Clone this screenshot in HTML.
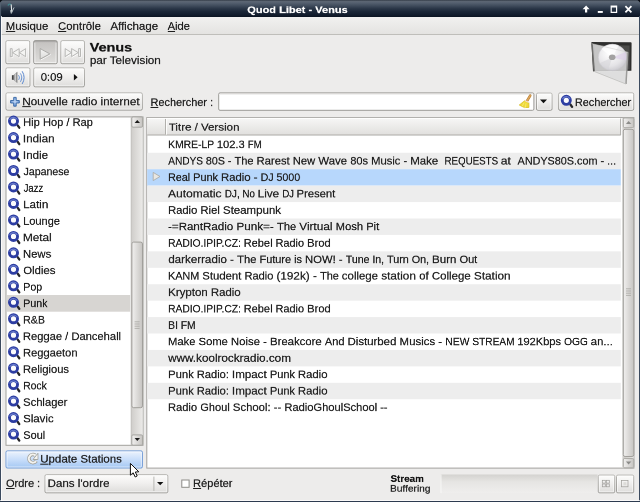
<!DOCTYPE html>
<html>
<head>
<meta charset="utf-8">
<title>Quod Libet - Venus</title>
<style>
html,body{margin:0;padding:0;}
body{width:640px;height:502px;overflow:hidden;background:#edeceb;font-family:"Liberation Sans",sans-serif;font-size:10px;color:#1c1c1c;position:relative;}
.abs{position:absolute;}
.t{position:absolute;white-space:nowrap;transform-origin:0 0;color:#1e1e1e;will-change:transform;-webkit-text-stroke:0.45px currentColor;}
u{text-decoration:underline;text-decoration-thickness:1.8px;text-underline-offset:1.6px;}
#titlebar{left:0;top:0;width:640px;height:16.6px;background:linear-gradient(#2e3742 0%,#5c6673 7%,#566170 16%,#424e5e 32%,#2b3748 50%,#1c2839 66%,#131e2f 85%,#0b1422 100%);}
#menubar{left:1px;top:17px;width:638px;height:17px;background:linear-gradient(#f1f1f0,#e4e3e1);border-bottom:1px solid #bfbeba;}
#lborder{left:0;top:16px;width:1.15px;height:486px;background:#3b4a5e;box-shadow:1px 0 0 rgba(255,255,255,0.75);}
#rborder{left:638.8px;top:16px;width:1.2px;height:486px;background:#3b4a5e;}
#bborder{left:0;top:500.5px;width:640px;height:1.5px;background:#2d3b50;box-shadow:0 -1px 0 rgba(255,255,255,0.7);}
</style>
</head>
<body>
<svg width="0" height="0" style="position:absolute">
<defs>
<g id="mag">
<path d="M10.6 9.9 L12.3 12.3" stroke="#26262a" stroke-width="2.3" stroke-linecap="round"/>
<circle cx="6.5" cy="5.7" r="4.05" fill="#fbfbfd" stroke="#2d3da2" stroke-width="2.9"/>
<path d="M2.6 4.6 A4.2 4.2 0 0 1 10.2 4.2" fill="none" stroke="#7f94dc" stroke-width="1.1" opacity="0.75"/>
</g>
</defs>
</svg>
<div id="titlebar" class="abs"></div>
<div id="menubar" class="abs"></div>

<svg class="abs" style="left:0;top:0" width="640" height="502" viewBox="0 0 640 502">
<defs>
<linearGradient id="gBtn" x1="0" y1="0" x2="0" y2="1"><stop offset="0" stop-color="#fdfdfc"/><stop offset="0.45" stop-color="#f1f0ef"/><stop offset="1" stop-color="#dddcda"/></linearGradient>
<linearGradient id="gBd" x1="0" y1="0" x2="0" y2="1"><stop offset="0" stop-color="#b4b3af"/><stop offset="1" stop-color="#9b9a96"/></linearGradient>
<linearGradient id="gPr" x1="0" y1="0" x2="0" y2="1"><stop offset="0" stop-color="#c3c1bf"/><stop offset="1" stop-color="#dfdedc"/></linearGradient>
<linearGradient id="gHl" x1="0" y1="0" x2="0" y2="1"><stop offset="0" stop-color="#edf4fd"/><stop offset="0.5" stop-color="#c9defa"/><stop offset="1" stop-color="#a3c7f3"/></linearGradient>
<linearGradient id="gHdr" x1="0" y1="0" x2="0" y2="1"><stop offset="0" stop-color="#f7f7f6"/><stop offset="1" stop-color="#e0dfdd"/></linearGradient>
<linearGradient id="gSb" x1="0" y1="0" x2="1" y2="0"><stop offset="0" stop-color="#cfcdca"/><stop offset="1" stop-color="#ebeae8"/></linearGradient>
<linearGradient id="gTh" x1="0" y1="0" x2="1" y2="0"><stop offset="0" stop-color="#f1f0ef"/><stop offset="1" stop-color="#c6c4c1"/></linearGradient>
<linearGradient id="gTr" x1="0" y1="0" x2="0" y2="1"><stop offset="0" stop-color="#d3d2cf"/><stop offset="0.4" stop-color="#e6e5e3"/><stop offset="1" stop-color="#efeeed"/></linearGradient>
</defs>
<rect x="5.90" y="40.70" width="23.80" height="23.00" rx="1.3" fill="url(#gBtn)" stroke="url(#gBd)" stroke-width="1" />
<rect x="6.90" y="41.70" width="21.80" height="21.00" rx="0.8" fill="none" stroke="#ffffff" stroke-width="1" opacity="0.6"/>
<rect x="33.80" y="40.70" width="23.30" height="23.00" rx="1.3" fill="url(#gPr)" stroke="#8f8e8a" stroke-width="1" />
<path d="M34.80 42.70 V62.70 H56.10 V42.70" fill="none" stroke="#fff" stroke-width="0.9" opacity="0.75"/>
<path d="M34.80 41.70 H56.10" stroke="#000" stroke-width="1" opacity="0.10"/>
<rect x="60.90" y="40.70" width="23.50" height="23.00" rx="1.3" fill="url(#gBtn)" stroke="url(#gBd)" stroke-width="1" />
<rect x="61.90" y="41.70" width="21.50" height="21.00" rx="0.8" fill="none" stroke="#ffffff" stroke-width="1" opacity="0.6"/>
<rect x="5.90" y="67.90" width="24.00" height="18.90" rx="1.3" fill="url(#gBtn)" stroke="url(#gBd)" stroke-width="1" />
<rect x="6.90" y="68.90" width="22.00" height="16.90" rx="0.8" fill="none" stroke="#ffffff" stroke-width="1" opacity="0.6"/>
<rect x="33.80" y="67.90" width="50.60" height="18.90" rx="1.3" fill="url(#gBtn)" stroke="url(#gBd)" stroke-width="1" />
<rect x="34.80" y="68.90" width="48.60" height="16.90" rx="0.8" fill="none" stroke="#ffffff" stroke-width="1" opacity="0.6"/>
<rect x="6.00" y="92.90" width="136.30" height="17.20" rx="1.3" fill="url(#gBtn)" stroke="url(#gBd)" stroke-width="1" />
<rect x="7.00" y="93.90" width="134.30" height="15.20" rx="0.8" fill="none" stroke="#ffffff" stroke-width="1" opacity="0.6"/>
<rect x="218.70" y="92.90" width="315.20" height="17.40" rx="1.3" fill="#ffffff" stroke="#9b9a96" stroke-width="1" />
<path d="M220 93.9 H532.6" stroke="#d9d8d5" stroke-width="1"/>
<rect x="536.50" y="93.10" width="15.50" height="17.20" rx="1.3" fill="url(#gBtn)" stroke="url(#gBd)" stroke-width="1" />
<rect x="537.50" y="94.10" width="13.50" height="15.20" rx="0.8" fill="none" stroke="#ffffff" stroke-width="1" opacity="0.6"/>
<rect x="558.70" y="92.90" width="75.00" height="17.40" rx="1.3" fill="url(#gBtn)" stroke="url(#gBd)" stroke-width="1" />
<rect x="559.70" y="93.90" width="73.00" height="15.40" rx="0.8" fill="none" stroke="#ffffff" stroke-width="1" opacity="0.6"/>
<rect x="6.00" y="116.90" width="137.00" height="328.40" rx="0" fill="#ffffff" stroke="#a2a19d" stroke-width="1" />
<rect x="131.20" y="117.40" width="11.30" height="327.40" rx="0" fill="url(#gSb)" />
<path d="M131.2 117.4 V444.8" stroke="#b9b8b4" stroke-width="0.8"/>
<rect x="131.80" y="116.90" width="10.80" height="10.30" rx="1.2" fill="url(#gTh)" stroke="#a6a5a1" stroke-width="1" />
<rect x="131.80" y="434.90" width="10.80" height="10.30" rx="1.2" fill="url(#gTh)" stroke="#a6a5a1" stroke-width="1" />
<rect x="131.90" y="242.10" width="10.60" height="165.60" rx="1.8" fill="url(#gTh)" stroke="#a19f9b" stroke-width="1" />
<rect x="7.00" y="295.00" width="123.20" height="16.70" rx="0" fill="#d7d5d2" />
<rect x="146.80" y="117.60" width="487.10" height="350.50" rx="0" fill="#ffffff" stroke="#a2a19d" stroke-width="1" />
<rect x="622.40" y="117.90" width="11.00" height="349.70" rx="0" fill="url(#gSb)" />
<rect x="623.30" y="117.90" width="10.50" height="9.80" rx="1.5" fill="url(#gTh)" stroke="#a9a8a4" stroke-width="1" />
<rect x="623.30" y="458.40" width="10.50" height="9.40" rx="1.5" fill="url(#gTh)" stroke="#a9a8a4" stroke-width="1" />
<rect x="623.30" y="129.30" width="10.50" height="327.20" rx="1.8" fill="url(#gTh)" stroke="#a19f9b" stroke-width="1" />
<rect x="147.20" y="118.00" width="473.60" height="17.20" rx="0" fill="url(#gHdr)" />
<path d="M147.2 135 H620.8" stroke="#aeada9" stroke-width="1"/>
<path d="M620.6 118.6 V135" stroke="#aeada9" stroke-width="1"/>
<path d="M165.5 118.6 V134.6" stroke="#b1b0ac" stroke-width="1"/>
<path d="M166.5 118.6 V134.6" stroke="#fdfdfc" stroke-width="1"/>
<path d="M147.2 118.4 H620" stroke="#ffffff" stroke-width="1"/>
<rect x="147.20" y="152.78" width="473.60" height="16.43" rx="0" fill="#ededed" />
<rect x="147.20" y="169.21" width="473.60" height="16.43" rx="0" fill="#b7d7fc" />
<rect x="147.20" y="185.64" width="473.60" height="16.43" rx="0" fill="#ededed" />
<rect x="147.20" y="218.50" width="473.60" height="16.43" rx="0" fill="#ededed" />
<rect x="147.20" y="251.36" width="473.60" height="16.43" rx="0" fill="#ededed" />
<rect x="147.20" y="284.22" width="473.60" height="16.43" rx="0" fill="#ededed" />
<rect x="147.20" y="317.08" width="473.60" height="16.43" rx="0" fill="#ededed" />
<rect x="147.20" y="349.94" width="473.60" height="16.43" rx="0" fill="#ededed" />
<rect x="147.20" y="382.80" width="473.60" height="16.43" rx="0" fill="#ededed" />
<rect x="6.00" y="450.90" width="136.40" height="17.10" rx="1.3" fill="url(#gHl)" stroke="#6f9ad6" stroke-width="1" />
<rect x="7.00" y="451.90" width="134.40" height="15.10" rx="0.8" fill="none" stroke="#ffffff" stroke-width="1" opacity="0.6"/>
<rect x="45.00" y="474.70" width="122.80" height="18.10" rx="1.3" fill="url(#gBtn)" stroke="url(#gBd)" stroke-width="1" />
<rect x="46.00" y="475.70" width="120.80" height="16.10" rx="0.8" fill="none" stroke="#ffffff" stroke-width="1" opacity="0.6"/>
<path d="M153.9 476.6 V491" stroke="#b9b8b4" stroke-width="1"/>
<rect x="181.80" y="480.00" width="7.30" height="7.30" rx="0" fill="#ffffff" stroke="#8d8c88" stroke-width="1" />
<rect x="440.60" y="474.50" width="157.00" height="18.70" rx="0" fill="url(#gTr)" />
<path d="M441 474.5 V493.2" stroke="#fbfbfa" stroke-width="0.8"/>
<rect x="598.30" y="475.10" width="16.40" height="17.70" rx="1.3" fill="url(#gBtn)" stroke="url(#gBd)" stroke-width="1" />
<rect x="599.30" y="476.10" width="14.40" height="15.70" rx="0.8" fill="none" stroke="#ffffff" stroke-width="1" opacity="0.6"/>
<rect x="616.50" y="475.10" width="17.20" height="17.70" rx="1.3" fill="url(#gBtn)" stroke="url(#gBd)" stroke-width="1" />
<rect x="617.50" y="476.10" width="15.20" height="15.70" rx="0.8" fill="none" stroke="#ffffff" stroke-width="1" opacity="0.6"/>
<g transform="translate(7,115.40)"><use href="#mag"/></g>
<g transform="translate(7,131.87)"><use href="#mag"/></g>
<g transform="translate(7,148.34)"><use href="#mag"/></g>
<g transform="translate(7,164.81)"><use href="#mag"/></g>
<g transform="translate(7,181.28)"><use href="#mag"/></g>
<g transform="translate(7,197.75)"><use href="#mag"/></g>
<g transform="translate(7,214.22)"><use href="#mag"/></g>
<g transform="translate(7,230.69)"><use href="#mag"/></g>
<g transform="translate(7,247.16)"><use href="#mag"/></g>
<g transform="translate(7,263.63)"><use href="#mag"/></g>
<g transform="translate(7,280.10)"><use href="#mag"/></g>
<g transform="translate(7,296.57)"><use href="#mag"/></g>
<g transform="translate(7,313.04)"><use href="#mag"/></g>
<g transform="translate(7,329.51)"><use href="#mag"/></g>
<g transform="translate(7,345.98)"><use href="#mag"/></g>
<g transform="translate(7,362.45)"><use href="#mag"/></g>
<g transform="translate(7,378.92)"><use href="#mag"/></g>
<g transform="translate(7,395.39)"><use href="#mag"/></g>
<g transform="translate(7,411.86)"><use href="#mag"/></g>
<g transform="translate(7,428.33)"><use href="#mag"/></g>
</svg>


<div class="t" id="t0" style="left:247px;top:3px;font-size:19.2px;line-height:25px;font-weight:bold;color:#ffffff;transform:translate(0.26px,0.50px) rotate(0.02deg) scale(0.5746,0.5);">Quod Libet - Venus</div>
<div class="t" id="t1" style="left:5px;top:19px;font-size:21.2px;line-height:27px;transform:translate(0.89px,0.30px) rotate(0.02deg) scale(0.5296,0.5);"><u>M</u>usique</div>
<div class="t" id="t2" style="left:58px;top:19px;font-size:21.2px;line-height:27px;transform:translate(0.04px,0.30px) rotate(0.02deg) scale(0.5365,0.5);"><u>C</u>ontrôle</div>
<div class="t" id="t3" style="left:110px;top:19px;font-size:21.2px;line-height:27px;transform:translate(0.47px,0.30px) rotate(0.02deg) scale(0.5417,0.5);">Affichage</div>
<div class="t" id="t4" style="left:167px;top:19px;font-size:21.2px;line-height:27px;transform:translate(0.66px,0.30px) rotate(0.02deg) scale(0.5224,0.5);"><u>A</u>ide</div>
<div class="t" id="t5" style="left:89px;top:39px;font-size:24px;line-height:31px;font-weight:bold;color:#111;transform:translate(0.70px,0.50px) rotate(0.02deg) scale(0.6016,0.5);">Venus</div>
<div class="t" id="t6" style="left:89px;top:53px;font-size:21.2px;line-height:27px;transform:translate(0.92px,0.50px) rotate(0.02deg) scale(0.5483,0.5);">par Television</div>
<div class="t" id="t7" style="left:40px;top:70px;font-size:21.2px;line-height:27px;transform:translate(0.81px,0.20px) rotate(0.02deg) scale(0.5283,0.5);">0:09</div>
<div class="t" id="t8" style="left:22px;top:94px;font-size:21.6px;line-height:29px;transform:translate(0.28px,0.30px) rotate(0.02deg) scale(0.5433,0.5);"><u>N</u>ouvelle radio internet</div>
<div class="t" id="t9" style="left:150px;top:95px;font-size:21.2px;line-height:27px;transform:translate(0.54px,0.50px) rotate(0.02deg) scale(0.5155,0.5);"><u>R</u>echercher :</div>
<div class="t" id="t10" style="left:574px;top:95px;font-size:21.2px;line-height:27px;transform:translate(0.96px,0.50px) rotate(0.02deg) scale(0.5127,0.5);">Rechercher</div>
<div class="t" id="t11" style="left:40px;top:452px;font-size:21.2px;line-height:27px;transform:translate(0.28px,0.10px) rotate(0.02deg) scale(0.5410,0.5);"><u>U</u>pdate Stations</div>
<div class="t" id="t12" style="left:5px;top:476px;font-size:21.2px;line-height:27px;transform:translate(0.99px,0.50px) rotate(0.02deg) scale(0.5197,0.5);"><u>O</u>rdre :</div>
<div class="t" id="t13" style="left:47px;top:476px;font-size:21.2px;line-height:27px;transform:translate(0.63px,0.50px) rotate(0.02deg) scale(0.5452,0.5);">Dans l'ordre</div>
<div class="t" id="t14" style="left:193px;top:476px;font-size:21.2px;line-height:27px;transform:translate(0.06px,0.50px) rotate(0.02deg) scale(0.5231,0.5);"><u>R</u>épéter</div>
<div class="t" id="t15" style="left:390px;top:472px;font-size:18px;line-height:24px;font-weight:bold;color:#111;transform:translate(0.49px,0.80px) rotate(0.02deg) scale(0.5475,0.5);">Stream</div>
<div class="t" id="t16" style="left:390px;top:482px;font-size:18px;line-height:24px;transform:translate(0.02px,0.60px) rotate(0.02deg) scale(0.5636,0.5);">Buffering</div>
<div class="t" id="t17" style="left:168px;top:120px;font-size:20.4px;line-height:26px;transform:translate(0.79px,0.60px) rotate(0.02deg) scale(0.5650,0.5);">Titre / Version</div>
<div class="t" id="t18" style="left:23px;top:115px;font-size:21.2px;line-height:27px;transform:translate(0.19px,0.40px) rotate(0.02deg) scale(0.5239,0.5);">Hip Hop / Rap</div>
<div class="t" id="t19" style="left:22px;top:131px;font-size:21.2px;line-height:27px;transform:translate(0.89px,0.87px) rotate(0.02deg) scale(0.5483,0.5);">Indian</div>
<div class="t" id="t20" style="left:22px;top:148px;font-size:21.2px;line-height:27px;transform:translate(0.93px,0.34px) rotate(0.02deg) scale(0.5467,0.5);">Indie</div>
<div class="t" id="t21" style="left:23px;top:164px;font-size:21.2px;line-height:27px;transform:translate(0.58px,0.81px) rotate(0.02deg) scale(0.4988,0.5);">Japanese</div>
<div class="t" id="t22" style="left:23px;top:181px;font-size:21.2px;line-height:27px;transform:translate(0.61px,0.28px) rotate(0.02deg) scale(0.4494,0.5);">Jazz</div>
<div class="t" id="t23" style="left:23px;top:197px;font-size:21.2px;line-height:27px;transform:translate(0.20px,0.75px) rotate(0.02deg) scale(0.5466,0.5);">Latin</div>
<div class="t" id="t24" style="left:23px;top:214px;font-size:21.2px;line-height:27px;transform:translate(0.22px,0.22px) rotate(0.02deg) scale(0.5189,0.5);">Lounge</div>
<div class="t" id="t25" style="left:22px;top:230px;font-size:21.2px;line-height:27px;transform:translate(0.96px,0.69px) rotate(0.02deg) scale(0.5545,0.5);">Metal</div>
<div class="t" id="t26" style="left:23px;top:247px;font-size:21.2px;line-height:27px;transform:translate(0.04px,0.16px) rotate(0.02deg) scale(0.5317,0.5);">News</div>
<div class="t" id="t27" style="left:23px;top:263px;font-size:21.2px;line-height:27px;transform:translate(0.25px,0.63px) rotate(0.02deg) scale(0.5352,0.5);">Oldies</div>
<div class="t" id="t28" style="left:23px;top:280px;font-size:21.2px;line-height:27px;transform:translate(0.27px,0.10px) rotate(0.02deg) scale(0.4986,0.5);">Pop</div>
<div class="t" id="t29" style="left:23px;top:296px;font-size:21.2px;line-height:27px;transform:translate(0.19px,0.57px) rotate(0.02deg) scale(0.5022,0.5);">Punk</div>
<div class="t" id="t30" style="left:23px;top:313px;font-size:21.2px;line-height:27px;transform:translate(0.12px,0.04px) rotate(0.02deg) scale(0.4998,0.5);">R&amp;B</div>
<div class="t" id="t31" style="left:22px;top:329px;font-size:21.2px;line-height:27px;transform:translate(0.97px,0.51px) rotate(0.02deg) scale(0.5268,0.5);">Reggae / Dancehall</div>
<div class="t" id="t32" style="left:23px;top:345px;font-size:21.2px;line-height:27px;transform:translate(0.06px,0.98px) rotate(0.02deg) scale(0.5251,0.5);">Reggaeton</div>
<div class="t" id="t33" style="left:23px;top:362px;font-size:21.2px;line-height:27px;transform:translate(0.01px,0.45px) rotate(0.02deg) scale(0.5279,0.5);">Religious</div>
<div class="t" id="t34" style="left:23px;top:378px;font-size:21.2px;line-height:27px;transform:translate(0.23px,0.92px) rotate(0.02deg) scale(0.4878,0.5);">Rock</div>
<div class="t" id="t35" style="left:23px;top:395px;font-size:21.2px;line-height:27px;transform:translate(0.11px,0.39px) rotate(0.02deg) scale(0.5297,0.5);">Schlager</div>
<div class="t" id="t36" style="left:23px;top:411px;font-size:21.2px;line-height:27px;transform:translate(0.20px,0.86px) rotate(0.02deg) scale(0.5384,0.5);">Slavic</div>
<div class="t" id="t37" style="left:23px;top:428px;font-size:21.2px;line-height:27px;transform:translate(0.26px,0.33px) rotate(0.02deg) scale(0.5160,0.5);">Soul</div>
<div class="t" id="t38" style="left:168px;top:137px;font-size:21.2px;line-height:27px;white-space:pre;transform:translate(0.15px,0.60px) rotate(0.02deg) scale(0.4885,0.5);">KMRE-LP </div>
<div class="t" id="t39" style="left:216px;top:137px;font-size:21.2px;line-height:27px;white-space:pre;transform:translate(0.85px,0.60px) rotate(0.02deg) scale(0.5261,0.5);">102.3 </div>
<div class="t" id="t40" style="left:247px;top:137px;font-size:21.2px;line-height:27px;white-space:pre;transform:translate(0.85px,0.60px) rotate(0.02deg) scale(0.4511,0.5);">FM</div>
<div class="t" id="t41" style="left:168px;top:154px;font-size:21.2px;line-height:27px;white-space:pre;transform:translate(0.25px,0.03px) rotate(0.02deg) scale(0.4766,0.5);">ANDYS </div>
<div class="t" id="t42" style="left:205px;top:154px;font-size:21.2px;line-height:27px;white-space:pre;transform:translate(0.85px,0.03px) rotate(0.02deg) scale(0.5077,0.5);">80S - </div>
<div class="t" id="t43" style="left:234px;top:154px;font-size:21.2px;line-height:27px;white-space:pre;transform:translate(0.55px,0.03px) rotate(0.02deg) scale(0.5188,0.5);">The </div>
<div class="t" id="t44" style="left:256px;top:154px;font-size:21.2px;line-height:27px;white-space:pre;transform:translate(0.55px,0.03px) rotate(0.02deg) scale(0.5315,0.5);">Rarest </div>
<div class="t" id="t45" style="left:292px;top:154px;font-size:21.2px;line-height:27px;white-space:pre;transform:translate(0.85px,0.03px) rotate(0.02deg) scale(0.5271,0.5);">New </div>
<div class="t" id="t46" style="left:318px;top:154px;font-size:21.2px;line-height:27px;white-space:pre;transform:translate(0.30px,0.03px) rotate(0.02deg) scale(0.5399,0.5);">Wave </div>
<div class="t" id="t47" style="left:350px;top:154px;font-size:21.2px;line-height:27px;white-space:pre;transform:translate(0.30px,0.03px) rotate(0.02deg) scale(0.5204,0.5);">80s </div>
<div class="t" id="t48" style="left:371px;top:154px;font-size:21.2px;line-height:27px;white-space:pre;transform:translate(0.15px,0.03px) rotate(0.02deg) scale(0.5273,0.5);">Music - </div>
<div class="t" id="t49" style="left:410px;top:154px;font-size:21.2px;line-height:27px;white-space:pre;transform:translate(0.25px,0.03px) rotate(0.02deg) scale(0.5394,0.5);">Make  </div>
<div class="t" id="t50" style="left:444px;top:154px;font-size:21.2px;line-height:27px;white-space:pre;transform:translate(0.55px,0.03px) rotate(0.02deg) scale(0.4594,0.5);">REQUESTS </div>
<div class="t" id="t51" style="left:500px;top:154px;font-size:21.2px;line-height:27px;white-space:pre;transform:translate(0.80px,0.03px) rotate(0.02deg) scale(0.5687,0.5);">at  </div>
<div class="t" id="t52" style="left:517px;top:154px;font-size:21.2px;line-height:27px;white-space:pre;transform:translate(0.55px,0.03px) rotate(0.02deg) scale(0.5101,0.5);">ANDYS80S.com - ...</div>
<div class="t" id="t53" style="left:168px;top:170px;font-size:21.2px;line-height:27px;white-space:pre;transform:translate(0.15px,0.46px) rotate(0.02deg) scale(0.5054,0.5);">Real </div>
<div class="t" id="t54" style="left:193px;top:170px;font-size:21.2px;line-height:27px;white-space:pre;transform:translate(0.15px,0.46px) rotate(0.02deg) scale(0.5149,0.5);">Punk </div>
<div class="t" id="t55" style="left:221px;top:170px;font-size:21.2px;line-height:27px;white-space:pre;transform:translate(0.05px,0.46px) rotate(0.02deg) scale(0.5338,0.5);">Radio - </div>
<div class="t" id="t56" style="left:260px;top:170px;font-size:21.2px;line-height:27px;white-space:pre;transform:translate(0.65px,0.46px) rotate(0.02deg) scale(0.4999,0.5);">DJ 5000</div>
<div class="t" id="t57" style="left:168px;top:186px;font-size:21.2px;line-height:27px;white-space:pre;transform:translate(0.05px,0.89px) rotate(0.02deg) scale(0.5675,0.5);">Automatic </div>
<div class="t" id="t58" style="left:224px;top:186px;font-size:21.2px;line-height:27px;white-space:pre;transform:translate(0.85px,0.89px) rotate(0.02deg) scale(0.4643,0.5);">DJ, No </div>
<div class="t" id="t59" style="left:257px;top:186px;font-size:21.2px;line-height:27px;white-space:pre;transform:translate(0.65px,0.89px) rotate(0.02deg) scale(0.5540,0.5);">Live </div>
<div class="t" id="t60" style="left:282px;top:186px;font-size:21.2px;line-height:27px;white-space:pre;transform:translate(0.45px,0.89px) rotate(0.02deg) scale(0.4437,0.5);">DJ </div>
<div class="t" id="t61" style="left:296px;top:186px;font-size:21.2px;line-height:27px;white-space:pre;transform:translate(0.55px,0.89px) rotate(0.02deg) scale(0.5313,0.5);">Present</div>
<div class="t" id="t62" style="left:168px;top:203px;font-size:21.2px;line-height:27px;white-space:pre;transform:translate(0.15px,0.32px) rotate(0.02deg) scale(0.5273,0.5);">Radio </div>
<div class="t" id="t63" style="left:200px;top:203px;font-size:21.2px;line-height:27px;white-space:pre;transform:translate(0.45px,0.32px) rotate(0.02deg) scale(0.5308,0.5);">Riel </div>
<div class="t" id="t64" style="left:222px;top:203px;font-size:21.2px;line-height:27px;white-space:pre;transform:translate(0.95px,0.32px) rotate(0.02deg) scale(0.5420,0.5);">Steampunk</div>
<div class="t" id="t65" style="left:168px;top:219px;font-size:21.2px;line-height:27px;white-space:pre;transform:translate(0.05px,0.75px) rotate(0.02deg) scale(0.5453,0.5);">-=RantRadio </div>
<div class="t" id="t66" style="left:236px;top:219px;font-size:21.2px;line-height:27px;white-space:pre;transform:translate(0.45px,0.75px) rotate(0.02deg) scale(0.5516,0.5);">Punk=- </div>
<div class="t" id="t67" style="left:277px;top:219px;font-size:21.2px;line-height:27px;white-space:pre;transform:translate(0.05px,0.75px) rotate(0.02deg) scale(0.5235,0.5);">The </div>
<div class="t" id="t68" style="left:299px;top:219px;font-size:21.2px;line-height:27px;white-space:pre;transform:translate(0.25px,0.75px) rotate(0.02deg) scale(0.5567,0.5);">Virtual </div>
<div class="t" id="t69" style="left:335px;top:219px;font-size:21.2px;line-height:27px;white-space:pre;transform:translate(0.75px,0.75px) rotate(0.02deg) scale(0.5277,0.5);">Mosh Pit</div>
<div class="t" id="t70" style="left:168px;top:236px;font-size:21.2px;line-height:27px;white-space:pre;transform:translate(0.15px,0.18px) rotate(0.02deg) scale(0.4840,0.5);">RADIO.IPIP.CZ: </div>
<div class="t" id="t71" style="left:243px;top:236px;font-size:21.2px;line-height:27px;white-space:pre;transform:translate(0.75px,0.18px) rotate(0.02deg) scale(0.5192,0.5);">Rebel </div>
<div class="t" id="t72" style="left:275px;top:236px;font-size:21.2px;line-height:27px;white-space:pre;transform:translate(0.55px,0.18px) rotate(0.02deg) scale(0.5159,0.5);">Radio </div>
<div class="t" id="t73" style="left:307px;top:236px;font-size:21.2px;line-height:27px;white-space:pre;transform:translate(0.15px,0.18px) rotate(0.02deg) scale(0.5250,0.5);">Brod</div>
<div class="t" id="t74" style="left:168px;top:252px;font-size:21.2px;line-height:27px;white-space:pre;transform:translate(0.30px,0.61px) rotate(0.02deg) scale(0.5464,0.5);">darkerradio - </div>
<div class="t" id="t75" style="left:237px;top:252px;font-size:21.2px;line-height:27px;white-space:pre;transform:translate(0.15px,0.61px) rotate(0.02deg) scale(0.5282,0.5);">The </div>
<div class="t" id="t76" style="left:259px;top:252px;font-size:21.2px;line-height:27px;white-space:pre;transform:translate(0.55px,0.61px) rotate(0.02deg) scale(0.5152,0.5);">Future is </div>
<div class="t" id="t77" style="left:305px;top:252px;font-size:21.2px;line-height:27px;white-space:pre;transform:translate(0.05px,0.61px) rotate(0.02deg) scale(0.5327,0.5);">NOW! - </div>
<div class="t" id="t78" style="left:345px;top:252px;font-size:21.2px;line-height:27px;white-space:pre;transform:translate(0.80px,0.61px) rotate(0.02deg) scale(0.4979,0.5);">Tune In, </div>
<div class="t" id="t79" style="left:387px;top:252px;font-size:21.2px;line-height:27px;white-space:pre;transform:translate(0.05px,0.61px) rotate(0.02deg) scale(0.5073,0.5);">Turn On, </div>
<div class="t" id="t80" style="left:432px;top:252px;font-size:21.2px;line-height:27px;white-space:pre;transform:translate(0.05px,0.61px) rotate(0.02deg) scale(0.5429,0.5);">Burn </div>
<div class="t" id="t81" style="left:459px;top:252px;font-size:21.2px;line-height:27px;white-space:pre;transform:translate(0.55px,0.61px) rotate(0.02deg) scale(0.5211,0.5);">Out</div>
<div class="t" id="t82" style="left:168px;top:269px;font-size:21.2px;line-height:27px;white-space:pre;transform:translate(0.05px,0.04px) rotate(0.02deg) scale(0.5104,0.5);">KANM </div>
<div class="t" id="t83" style="left:202px;top:269px;font-size:21.2px;line-height:27px;white-space:pre;transform:translate(0.30px,0.04px) rotate(0.02deg) scale(0.5352,0.5);">Student </div>
<div class="t" id="t84" style="left:244px;top:269px;font-size:21.2px;line-height:27px;white-space:pre;transform:translate(0.55px,0.04px) rotate(0.02deg) scale(0.5208,0.5);">Radio </div>
<div class="t" id="t85" style="left:276px;top:269px;font-size:21.2px;line-height:27px;white-space:pre;transform:translate(0.45px,0.04px) rotate(0.02deg) scale(0.5539,0.5);">(192k) - </div>
<div class="t" id="t86" style="left:320px;top:269px;font-size:21.2px;line-height:27px;white-space:pre;transform:translate(0.15px,0.04px) rotate(0.02deg) scale(0.5105,0.5);">The </div>
<div class="t" id="t87" style="left:341px;top:269px;font-size:21.2px;line-height:27px;white-space:pre;transform:translate(0.80px,0.04px) rotate(0.02deg) scale(0.5402,0.5);">college </div>
<div class="t" id="t88" style="left:381px;top:269px;font-size:21.2px;line-height:27px;white-space:pre;transform:translate(0.25px,0.04px) rotate(0.02deg) scale(0.5548,0.5);">station </div>
<div class="t" id="t89" style="left:419px;top:269px;font-size:21.2px;line-height:27px;white-space:pre;transform:translate(0.15px,0.04px) rotate(0.02deg) scale(0.5410,0.5);">of College </div>
<div class="t" id="t90" style="left:473px;top:269px;font-size:21.2px;line-height:27px;white-space:pre;transform:translate(0.95px,0.04px) rotate(0.02deg) scale(0.5548,0.5);">Station</div>
<div class="t" id="t91" style="left:168px;top:285px;font-size:21.2px;line-height:27px;white-space:pre;transform:translate(0.15px,0.47px) rotate(0.02deg) scale(0.5424,0.5);">Krypton </div>
<div class="t" id="t92" style="left:210px;top:285px;font-size:21.2px;line-height:27px;white-space:pre;transform:translate(0.95px,0.47px) rotate(0.02deg) scale(0.5365,0.5);">Radio</div>
<div class="t" id="t93" style="left:168px;top:301px;font-size:21.2px;line-height:27px;white-space:pre;transform:translate(0.15px,0.90px) rotate(0.02deg) scale(0.4840,0.5);">RADIO.IPIP.CZ: </div>
<div class="t" id="t94" style="left:243px;top:301px;font-size:21.2px;line-height:27px;white-space:pre;transform:translate(0.75px,0.90px) rotate(0.02deg) scale(0.5192,0.5);">Rebel </div>
<div class="t" id="t95" style="left:275px;top:301px;font-size:21.2px;line-height:27px;white-space:pre;transform:translate(0.55px,0.90px) rotate(0.02deg) scale(0.5159,0.5);">Radio </div>
<div class="t" id="t96" style="left:307px;top:301px;font-size:21.2px;line-height:27px;white-space:pre;transform:translate(0.15px,0.90px) rotate(0.02deg) scale(0.5250,0.5);">Brod</div>
<div class="t" id="t97" style="left:168px;top:318px;font-size:21.2px;line-height:27px;white-space:pre;transform:translate(0.15px,0.33px) rotate(0.02deg) scale(0.4858,0.5);">BI FM</div>
<div class="t" id="t98" style="left:168px;top:334px;font-size:21.2px;line-height:27px;white-space:pre;transform:translate(0.05px,0.76px) rotate(0.02deg) scale(0.5286,0.5);">Make </div>
<div class="t" id="t99" style="left:198px;top:334px;font-size:21.2px;line-height:27px;white-space:pre;transform:translate(0.55px,0.76px) rotate(0.02deg) scale(0.5290,0.5);">Some </div>
<div class="t" id="t100" style="left:230px;top:334px;font-size:21.2px;line-height:27px;white-space:pre;transform:translate(0.95px,0.76px) rotate(0.02deg) scale(0.5356,0.5);">Noise - </div>
<div class="t" id="t101" style="left:270px;top:334px;font-size:21.2px;line-height:27px;white-space:pre;transform:translate(0.05px,0.76px) rotate(0.02deg) scale(0.5349,0.5);">Breakcore </div>
<div class="t" id="t102" style="left:324px;top:334px;font-size:21.2px;line-height:27px;white-space:pre;transform:translate(0.85px,0.76px) rotate(0.02deg) scale(0.5207,0.5);">And </div>
<div class="t" id="t103" style="left:347px;top:334px;font-size:21.2px;line-height:27px;white-space:pre;transform:translate(0.55px,0.76px) rotate(0.02deg) scale(0.5384,0.5);">Disturbed </div>
<div class="t" id="t104" style="left:399px;top:334px;font-size:21.2px;line-height:27px;white-space:pre;transform:translate(0.55px,0.76px) rotate(0.02deg) scale(0.5398,0.5);">Musics - </div>
<div class="t" id="t105" style="left:445px;top:334px;font-size:21.2px;line-height:27px;white-space:pre;transform:translate(0.30px,0.76px) rotate(0.02deg) scale(0.4889,0.5);">NEW </div>
<div class="t" id="t106" style="left:472px;top:334px;font-size:21.2px;line-height:27px;white-space:pre;transform:translate(0.35px,0.76px) rotate(0.02deg) scale(0.4778,0.5);">STREAM </div>
<div class="t" id="t107" style="left:517px;top:334px;font-size:21.2px;line-height:27px;white-space:pre;transform:translate(0.35px,0.76px) rotate(0.02deg) scale(0.5216,0.5);">192Kbps </div>
<div class="t" id="t108" style="left:564px;top:334px;font-size:21.2px;line-height:27px;white-space:pre;transform:translate(0.05px,0.76px) rotate(0.02deg) scale(0.4826,0.5);">OGG </div>
<div class="t" id="t109" style="left:590px;top:334px;font-size:21.2px;line-height:27px;white-space:pre;transform:translate(0.75px,0.76px) rotate(0.02deg) scale(0.5360,0.5);">an...</div>
<div class="t" id="t110" style="left:168px;top:351px;font-size:21.2px;line-height:27px;white-space:pre;transform:translate(0.15px,0.19px) rotate(0.02deg) scale(0.5518,0.5);">www.koolrockradio.com</div>
<div class="t" id="t111" style="left:168px;top:367px;font-size:21.2px;line-height:27px;white-space:pre;transform:translate(0.15px,0.62px) rotate(0.02deg) scale(0.5296,0.5);">Punk </div>
<div class="t" id="t112" style="left:196px;top:367px;font-size:21.2px;line-height:27px;white-space:pre;transform:translate(0.85px,0.62px) rotate(0.02deg) scale(0.5228,0.5);">Radio: </div>
<div class="t" id="t113" style="left:231px;top:367px;font-size:21.2px;line-height:27px;white-space:pre;transform:translate(0.95px,0.62px) rotate(0.02deg) scale(0.5469,0.5);">Impact </div>
<div class="t" id="t114" style="left:269px;top:367px;font-size:21.2px;line-height:27px;white-space:pre;transform:translate(0.95px,0.62px) rotate(0.02deg) scale(0.5167,0.5);">Punk </div>
<div class="t" id="t115" style="left:297px;top:367px;font-size:21.2px;line-height:27px;white-space:pre;transform:translate(0.95px,0.62px) rotate(0.02deg) scale(0.5347,0.5);">Radio</div>
<div class="t" id="t116" style="left:168px;top:384px;font-size:21.2px;line-height:27px;white-space:pre;transform:translate(0.15px,0.05px) rotate(0.02deg) scale(0.5296,0.5);">Punk </div>
<div class="t" id="t117" style="left:196px;top:384px;font-size:21.2px;line-height:27px;white-space:pre;transform:translate(0.85px,0.05px) rotate(0.02deg) scale(0.5228,0.5);">Radio: </div>
<div class="t" id="t118" style="left:231px;top:384px;font-size:21.2px;line-height:27px;white-space:pre;transform:translate(0.95px,0.05px) rotate(0.02deg) scale(0.5469,0.5);">Impact </div>
<div class="t" id="t119" style="left:269px;top:384px;font-size:21.2px;line-height:27px;white-space:pre;transform:translate(0.95px,0.05px) rotate(0.02deg) scale(0.5167,0.5);">Punk </div>
<div class="t" id="t120" style="left:297px;top:384px;font-size:21.2px;line-height:27px;white-space:pre;transform:translate(0.95px,0.05px) rotate(0.02deg) scale(0.5347,0.5);">Radio</div>
<div class="t" id="t121" style="left:168px;top:400px;font-size:21.2px;line-height:27px;white-space:pre;transform:translate(0.05px,0.48px) rotate(0.02deg) scale(0.5257,0.5);">Radio </div>
<div class="t" id="t122" style="left:200px;top:400px;font-size:21.2px;line-height:27px;white-space:pre;transform:translate(0.25px,0.48px) rotate(0.02deg) scale(0.5221,0.5);">Ghoul </div>
<div class="t" id="t123" style="left:232px;top:400px;font-size:21.2px;line-height:27px;white-space:pre;transform:translate(0.85px,0.48px) rotate(0.02deg) scale(0.5344,0.5);">School: -- </div>
<div class="t" id="t124" style="left:284px;top:400px;font-size:21.2px;line-height:27px;white-space:pre;transform:translate(0.45px,0.48px) rotate(0.02deg) scale(0.5247,0.5);">RadioGhoulSchool --</div>


<!-- ICONS -->
<svg class="abs" style="left:0;top:0;pointer-events:none" width="640" height="502" viewBox="0 0 640 502">
<defs>
<linearGradient id="gIco" x1="0" y1="0" x2="0" y2="1"><stop offset="0" stop-color="#f4f4f3"/><stop offset="1" stop-color="#dcdcda"/></linearGradient>
<linearGradient id="gCone" x1="0" y1="0" x2="1" y2="0"><stop offset="0" stop-color="#8a8a8a"/><stop offset="0.6" stop-color="#d2d2d2"/><stop offset="1" stop-color="#5a5a5a"/></linearGradient>
<radialGradient id="gPlus" cx="0.5" cy="0.45" r="0.6"><stop offset="0" stop-color="#c4d8f4"/><stop offset="0.55" stop-color="#8db1e4"/><stop offset="1" stop-color="#5a8ad0"/></radialGradient>
<radialGradient id="gDisc" cx="0.4" cy="0.35" r="0.8"><stop offset="0" stop-color="#ffffff"/><stop offset="0.6" stop-color="#e4e3e6"/><stop offset="1" stop-color="#bdbcc2"/></radialGradient>
<linearGradient id="gCover" x1="0" y1="0" x2="1" y2="1"><stop offset="0" stop-color="#d8d8d8" stop-opacity="0.9"/><stop offset="0.5" stop-color="#f2f2f2" stop-opacity="0.85"/><stop offset="1" stop-color="#c4c4c4" stop-opacity="0.9"/></linearGradient>
</defs>
<!-- prev -->
<g fill="none" stroke="#ffffff" stroke-width="0.9" stroke-linejoin="round" transform="translate(0.7,0.7)" opacity="0.9">
<rect x="10.3" y="48.7" width="1.9" height="8"/>
<path d="M19.2 48.7 L19.2 56.7 L12.6 52.7 Z"/>
<path d="M25.6 48.7 L25.6 56.7 L19.4 52.7 Z"/>
</g>
<g fill="#f4f4f2" stroke="#adadab" stroke-width="0.85" stroke-linejoin="round">
<rect x="10.3" y="48.7" width="1.9" height="8"/>
<path d="M19.2 48.7 L19.2 56.7 L12.6 52.7 Z"/>
<path d="M25.6 48.7 L25.6 56.7 L19.4 52.7 Z"/>
</g>
<!-- play -->
<path d="M40.9 49.3 L40.9 59.9 L50.5 54.6 Z" fill="none" stroke="#fff" stroke-width="0.9" opacity="0.8"/>
<path d="M40.2 48.6 L40.2 59.2 L49.8 53.9 Z" fill="url(#gIco)" stroke="#9f9f9c" stroke-width="0.85" stroke-linejoin="round"/>
<!-- next -->
<g fill="none" stroke="#ffffff" stroke-width="0.9" stroke-linejoin="round" transform="translate(0.7,0.7)" opacity="0.9">
<path d="M65.2 48.6 L65.2 56.6 L71.4 52.6 Z"/>
<path d="M71.6 48.6 L71.6 56.6 L78.2 52.6 Z"/>
<rect x="78.6" y="48.6" width="1.9" height="8"/>
</g>
<g fill="#f4f4f2" stroke="#adadab" stroke-width="0.85" stroke-linejoin="round">
<path d="M65.2 48.6 L65.2 56.6 L71.4 52.6 Z"/>
<path d="M71.6 48.6 L71.6 56.6 L78.2 52.6 Z"/>
<rect x="78.6" y="48.6" width="1.9" height="8"/>
</g>
<!-- volume -->
<rect x="11.9" y="75.2" width="2" height="4.6" fill="#454545"/>
<path d="M13.6 75.2 L17.2 72 L17.2 82.8 L13.6 79.8 Z" fill="url(#gCone)" stroke="#777" stroke-width="0.3"/>
<g fill="none" stroke="#4a7dcc" stroke-linecap="round" opacity="0.9">
<path d="M18.7 75.6 Q20 77.5 18.7 79.6" stroke-width="0.9" stroke-dasharray="1.2 0.8"/>
<path d="M20.6 73.8 Q22.8 77.5 20.6 81.4" stroke-width="0.95" stroke-dasharray="1.5 0.8"/>
<path d="M22.4 71.6 Q26 77.5 22.4 83.6" stroke-width="1"/>
</g>
<!-- time arrow -->
<path d="M73.9 74 L77.6 77.2 L73.9 80.4 Z" fill="#111"/>
<!-- plus -->
<path d="M13.7 97.4 h2.5 v3.1 h3.1 v2.5 h-3.1 v3.2 h-2.5 v-3.2 h-3.1 v-2.5 h3.1 Z" fill="url(#gPlus)" stroke="#3465a4" stroke-width="0.9" stroke-linejoin="round"/>
<!-- broom -->
<path d="M530.2 95.6 L527.2 100.6" stroke="#b07a30" stroke-width="2.6" stroke-linecap="round"/>
<path d="M530.2 95.6 L527.2 100.6" stroke="#dfa55a" stroke-width="1.5" stroke-linecap="round"/>
<path d="M524.8 100.6 L528.9 102.6 L529 107.4 Q524.6 109 519.2 105 Z" fill="#efda38" stroke="#d3b51a" stroke-width="0.6" stroke-linejoin="round"/>
<path d="M524 102.6 L522.2 106.4 M526 103.4 L525.4 107.6" stroke="#f8ec86" stroke-width="0.7"/>
<path d="M524.8 100.5 L528.9 102.5" stroke="#f3dfd2" stroke-width="1.3"/>
<!-- dropdown arrows -->
<path d="M540 99.6 L547 99.6 L543.5 103.2 Z" fill="#111"/>
<path d="M157 482 L163.4 482 L160.2 485.3 Z" fill="#111"/>
<!-- search icon in button -->
<g transform="translate(559.8,94.6)"><use href="#mag"/></g>
<!-- row play indicator -->
<path d="M153.2 172.4 L153.2 180.6 L160 176.5 Z" fill="#e9e7e2" stroke="#aaa7a1" stroke-width="0.8" stroke-linejoin="round"/>
<!-- scrollbar arrows -->
<path d="M134.6 123 L140 123 L137.3 119.9 Z" fill="#1c1c1c"/>
<path d="M134.6 438 L140 438 L137.3 441.1 Z" fill="#1c1c1c"/>
<path d="M625.9 123.9 L631.3 123.9 L628.6 120.9 Z" fill="#8b8b89"/>
<path d="M625.9 461.6 L631.3 461.6 L628.6 464.6 Z" fill="#8b8b89"/>
<!-- scrollbar grips -->
<g stroke="#a09f9b" stroke-width="0.7">
<path d="M134.6 321.8 h5 M134.6 324 h5 M134.6 326.2 h5 M134.6 328.4 h5"/>
<path d="M626 288.8 h5 M626 291 h5 M626 293.2 h5 M626 295.4 h5"/>
</g>
<!-- refresh icon -->
<g>
<path d="M35.2 455.2 A4.05 4.05 0 1 0 36.3 460.9" fill="none" stroke="#9f9f98" stroke-width="3.5" stroke-linecap="butt"/>
<path d="M37.9 453.3 L37.9 459.5 L33.1 459.5 Z" fill="#f4f3ef" stroke="#9f9f98" stroke-width="0.9" stroke-linejoin="round"/>
<path d="M35.4 455.4 A4.05 4.05 0 1 0 36.1 461.1" fill="none" stroke="#f4f3ef" stroke-width="2" stroke-linecap="butt"/>
<path d="M37.3 454.9 L37.3 458.9 L34.3 458.9 Z" fill="#f4f3ef"/>
</g>
<!-- bottom right icons -->
<g fill="none" stroke="#9d9c98" stroke-width="0.7">
<rect x="602.3" y="480.3" width="3" height="2.8"/><rect x="606.3" y="480.3" width="3" height="2.8"/>
<rect x="602.3" y="484" width="3" height="2.8"/><rect x="606.3" y="484" width="3" height="2.8"/>
<rect x="621.6" y="480.4" width="6.4" height="6.4"/>
</g>
<rect x="623.4" y="482.2" width="3" height="3" fill="#dcdbd8"/>
<!-- CD case -->
<g>
<path d="M591.4 42 L630.8 42.2 Q631.6 42.2 631.6 43.2 L631.4 70.8 L593 71.2 Z" fill="#2f2f2e"/>
<path d="M594.4 45 L629.6 45.6 L629.6 69.6 L595.4 70 Z" fill="#4c4c4a"/>
<path d="M592.2 43.8 L627.8 52.2 L626 84 L594.2 71.4 Z" fill="#e2e2e2" opacity="0.82"/>
<ellipse cx="612.4" cy="57.4" rx="14.2" ry="13.2" fill="url(#gDisc)" stroke="#c4c3c8" stroke-width="0.5"/>
<path d="M612.4 57.4 L601.4 49 A14.2 13.2 0 0 1 618.6 45.6 Z" fill="#ffffff" opacity="0.7"/>
<path d="M612.4 57.4 L625.4 52 A14.2 13.2 0 0 1 626.4 60.6 Z" fill="#dccdea" opacity="0.6"/>
<path d="M612.4 57.4 L600 63 A14.2 13.2 0 0 0 608 70 Z" fill="#d2d1d6" opacity="0.5"/>
<ellipse cx="612.2" cy="57.2" rx="3.3" ry="2.8" fill="#a3a2a2"/>
<path d="M597 71.6 L626 83.6 L626.6 71 Z" fill="#dcdcdc" opacity="0.7"/>
<path d="M592 43.6 L594.2 71.4" stroke="#6e6e6c" stroke-width="1.4"/>
<path d="M627.8 52.2 L626 84" stroke="#9c9c9a" stroke-width="1.5"/>
<path d="M594.2 71.4 L626 84" stroke="#c2c2c0" stroke-width="0.9"/>
<path d="M592.2 43.8 L627.8 52.2" stroke="#cfcfcd" stroke-width="0.7" opacity="0.8"/>
</g>
<!-- titlebar icon -->
<path d="M0 1 V16.6" stroke="#566372" stroke-width="2.2" opacity="0.8"/>
<path d="M0 0 H2.4 L0 2.4 Z M640 0 H637.6 L640 2.4 Z" fill="#0a0e14"/>
<path d="M8.2 5.2 Q9.4 3.4 10.8 4.4" fill="none" stroke="#3f858c" stroke-width="1.2" stroke-linecap="round"/>
<path d="M11.2 4.8 L11.7 11.4" fill="none" stroke="#e4e9ea" stroke-width="1.1" stroke-linecap="round"/>
<path d="M10.5 10.6 L11.3 13.4 L13.9 7.8" fill="none" stroke="#c3ccce" stroke-width="0.9" stroke-linecap="round" stroke-linejoin="round"/>
<!-- titlebar buttons -->
<g fill="#ffffff" stroke="none">
<path d="M586.1 5.6 L589.6 9.2 L587.2 9.2 L587.2 12.4 L585 12.4 L585 9.2 L582.6 9.2 Z"/>
<rect x="597.8" y="11" width="5" height="1.9"/>
<path d="M610.6 5.6 H617.2 V12.9 H610.6 Z M611.8 7.6 V11.8 H616 V7.6 Z" fill-rule="evenodd"/>
</g>
<path d="M625.4 6.2 L631.4 12.4 M631.4 6.2 L625.4 12.4" stroke="#fff" stroke-width="1.7" fill="none"/>
<!-- cursor -->
<path d="M130.4 463.4 L130.4 475.2 L133.2 472.8 L135.2 477 L137.2 476 L135.3 472 L138.8 471.8 Z" fill="#fff" stroke="#111" stroke-width="1" stroke-linejoin="round"/>
</svg>
<div id="lborder" class="abs"></div>
<div id="rborder" class="abs"></div>
<div id="bborder" class="abs"></div>
</body>
</html>
